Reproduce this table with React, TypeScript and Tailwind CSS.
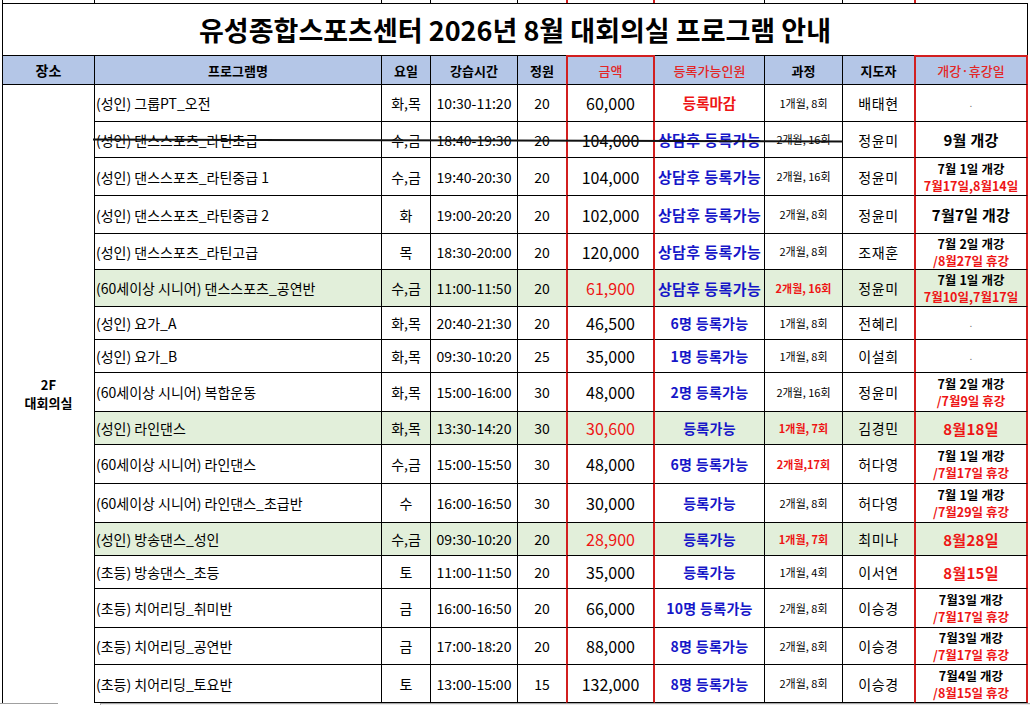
import React from "react";

const RED_TXT = "text-[#ee1515]";

type Note =
  | { t: "dot" }
  | { t: "big"; text: string; red?: boolean }
  | { t: "two"; a: string; b: string };

type Avail = { text: string; kind: "closed" | "consult" | "blue" };

type Row = {
  name: string;
  day: string;
  time: string;
  cap: string;
  price: string;
  priceRed?: boolean;
  avail: Avail;
  course: string;
  courseRed?: boolean;
  teacher: string;
  note: Note;
  h: number;
  green?: boolean;
  strike?: boolean;
};

const H: Record<number, string> = {
  33: "h-[33px]",
  36: "h-[36px]",
  37: "h-[37px]",
  38: "h-[38px]",
  39: "h-[39px]",
};

const consult: Avail = { text: "상담후 등록가능", kind: "consult" };
const able: Avail = { text: "등록가능", kind: "blue" };

const rows: Row[] = [
  { name: "(성인) 그룹PT_오전", day: "화,목", time: "10:30-11:20", cap: "20", price: "60,000", avail: { text: "등록마감", kind: "closed" }, course: "1개월, 8회", teacher: "배태현", note: { t: "dot" }, h: 37 },
  { name: "(성인) 댄스스포츠_라틴초급", day: "수,금", time: "18:40-19:30", cap: "20", price: "104,000", avail: consult, course: "2개월, 16회", teacher: "정윤미", note: { t: "big", text: "9월 개강" }, h: 36, strike: true },
  { name: "(성인) 댄스스포츠_라틴중급 1", day: "수,금", time: "19:40-20:30", cap: "20", price: "104,000", avail: consult, course: "2개월, 16회", teacher: "정윤미", note: { t: "two", a: "7월 1일 개강", b: "7월17일,8월14일" }, h: 38 },
  { name: "(성인) 댄스스포츠_라틴중급 2", day: "화", time: "19:00-20:20", cap: "20", price: "102,000", avail: consult, course: "2개월, 8회", teacher: "정윤미", note: { t: "big", text: "7월7일 개강" }, h: 38 },
  { name: "(성인) 댄스스포츠_라틴고급", day: "목", time: "18:30-20:00", cap: "20", price: "120,000", avail: consult, course: "2개월, 8회", teacher: "조재훈", note: { t: "two", a: "7월 2일 개강", b: "/8월27일 휴강" }, h: 36 },
  { name: "(60세이상 시니어) 댄스스포츠_공연반", day: "수,금", time: "11:00-11:50", cap: "20", price: "61,900", priceRed: true, avail: consult, course: "2개월, 16회", courseRed: true, teacher: "정윤미", note: { t: "two", a: "7월 1일 개강", b: "7월10일,7월17일" }, h: 37, green: true },
  { name: "(성인) 요가_A", day: "화,목", time: "20:40-21:30", cap: "20", price: "46,500", avail: { text: "6명 등록가능", kind: "blue" }, course: "1개월, 8회", teacher: "전혜리", note: { t: "dot" }, h: 33 },
  { name: "(성인) 요가_B", day: "화,목", time: "09:30-10:20", cap: "25", price: "35,000", avail: { text: "1명 등록가능", kind: "blue" }, course: "1개월, 8회", teacher: "이설희", note: { t: "dot" }, h: 33 },
  { name: "(60세이상 시니어) 복합운동", day: "화,목", time: "15:00-16:00", cap: "30", price: "48,000", avail: { text: "2명 등록가능", kind: "blue" }, course: "2개월, 16회", teacher: "정윤미", note: { t: "two", a: "7월 2일 개강", b: "/7월9일 휴강" }, h: 39 },
  { name: "(성인) 라인댄스", day: "화,목", time: "13:30-14:20", cap: "30", price: "30,600", priceRed: true, avail: able, course: "1개월, 7회", courseRed: true, teacher: "김경민", note: { t: "big", text: "8월18일", red: true }, h: 33, green: true },
  { name: "(60세이상 시니어) 라인댄스", day: "수,금", time: "15:00-15:50", cap: "30", price: "48,000", avail: { text: "6명 등록가능", kind: "blue" }, course: "2개월,17회", courseRed: true, teacher: "허다영", note: { t: "two", a: "7월 1일 개강", b: "/7월17일 휴강" }, h: 39 },
  { name: "(60세이상 시니어) 라인댄스_초급반", day: "수", time: "16:00-16:50", cap: "30", price: "30,000", avail: able, course: "2개월, 8회", teacher: "허다영", note: { t: "two", a: "7월 1일 개강", b: "/7월29일 휴강" }, h: 39 },
  { name: "(성인) 방송댄스_성인", day: "수,금", time: "09:30-10:20", cap: "20", price: "28,900", priceRed: true, avail: able, course: "1개월, 7회", courseRed: true, teacher: "최미나", note: { t: "big", text: "8월28일", red: true }, h: 33, green: true },
  { name: "(초등) 방송댄스_초등", day: "토", time: "11:00-11:50", cap: "20", price: "35,000", avail: able, course: "1개월, 4회", teacher: "이서연", note: { t: "big", text: "8월15일", red: true }, h: 33 },
  { name: "(초등) 치어리딩_취미반", day: "금", time: "16:00-16:50", cap: "20", price: "66,000", avail: { text: "10명 등록가능", kind: "blue" }, course: "2개월, 8회", teacher: "이승경", note: { t: "two", a: "7월3일 개강", b: "/7월17일 휴강" }, h: 39 },
  { name: "(초등) 치어리딩_공연반", day: "금", time: "17:00-18:20", cap: "20", price: "88,000", avail: { text: "8명 등록가능", kind: "blue" }, course: "2개월, 8회", teacher: "이승경", note: { t: "two", a: "7월3일 개강", b: "/7월17일 휴강" }, h: 37 },
  { name: "(초등) 치어리딩_토요반", day: "토", time: "13:00-15:00", cap: "15", price: "132,000", avail: { text: "8명 등록가능", kind: "blue" }, course: "2개월, 8회", teacher: "이승경", note: { t: "two", a: "7월4일 개강", b: "/8월15일 휴강" }, h: 38 },
];

// column width + side-border classes
const C = {
  place: "w-[92px] border-r border-r-black",
  name: "w-[287px] border-r border-r-black",
  day: "w-[49px] border-r border-r-black",
  time: "w-[87px] border-r border-r-black",
  cap: "w-[48px]",
  price: "w-[89px] border-x-2 border-x-[#d21f1f]",
  avail: "w-[110px] border-r border-r-black",
  course: "w-[78px] border-r border-r-black",
  teacher: "w-[71px]",
  note: "w-[114px] border-x-2 border-x-[#d21f1f]",
};

function Cell({ col, className = "", children }: { col: string; className?: string; children?: React.ReactNode }) {
  return (
    <div className={`${col} shrink-0 border-b border-b-black flex items-center ${className}`}>{children}</div>
  );
}

function AvailText({ a }: { a: Avail }) {
  if (a.kind === "closed")
    return <span className={`${RED_TXT} font-bold text-[14.5px]`}>{a.text}</span>;
  if (a.kind === "consult")
    return <span className="text-[#1616c8] font-bold text-[15px] tracking-[0.4px]">{a.text}</span>;
  return <span className="text-[#1616c8] font-bold text-[14px] tracking-[0.3px]">{a.text}</span>;
}

function NoteView({ n }: { n: Note }) {
  if (n.t === "dot") return <span className="text-[#777] text-[10px] leading-none">.</span>;
  if (n.t === "big")
    return (
      <span className={`font-bold text-[15px] tracking-[0.3px] ${n.red ? RED_TXT : "text-black"}`}>{n.text}</span>
    );
  return (
    <div className="flex flex-col items-center leading-[17px]">
      <span className="font-bold text-[12.5px] text-black tracking-[0.1px]">{n.a}</span>
      <span className={`font-bold text-[12.5px] ${RED_TXT}`}>{n.b}</span>
    </div>
  );
}

export default function App() {
  return (
    <div className="w-[1030px] h-[705px] overflow-hidden bg-white font-['Noto_Sans_CJK_KR','Noto_Sans',sans-serif] text-black">
      <div className="ml-[2px] w-[1026px]">
        {/* top partial strip */}
        <div className="flex h-[3px] border-l border-l-black">
          <div className="w-[92px] shrink-0 border-r border-r-black" />
          <div className="w-[287px] shrink-0 border-r border-r-black" />
          <div className="w-[49px] shrink-0 border-r border-r-black" />
          <div className="w-[87px] shrink-0 border-r border-r-black" />
          <div className="w-[48px] shrink-0" />
          <div className="w-[89px] shrink-0 border-x-2 border-x-[#d21f1f]" />
          <div className="w-[110px] shrink-0 border-r border-r-black" />
          <div className="w-[78px] shrink-0 border-r border-r-black" />
          <div className="w-[71px] shrink-0" />
          <div className="w-[114px] shrink-0 border-l-2 border-l-[#d21f1f]" />
        </div>

        {/* title */}
        <div className="h-[52px] border-t border-x border-black flex items-center justify-center">
          <h1 className="text-[27px] font-bold leading-none">
            유성종합스포츠센터 2026년 8월 대회의실 프로그램 안내
          </h1>
        </div>

        {/* header */}
        <div className="flex h-[30px] border-l border-l-black bg-[#b4c6e7] text-[13px] font-bold leading-none">
          <div className={`${C.place} shrink-0 border-y border-y-black flex items-center justify-center text-[14px]`}>장소</div>
          <div className={`${C.name} shrink-0 border-y border-y-black flex items-center justify-center`}>프로그램명</div>
          <div className={`${C.day} shrink-0 border-y border-y-black flex items-center justify-center`}>요일</div>
          <div className={`${C.time} shrink-0 border-y border-y-black flex items-center justify-center`}>강습시간</div>
          <div className={`${C.cap} shrink-0 border-y border-y-black flex items-center justify-center`}>정원</div>
          <div className={`${C.price} shrink-0 border-t-2 border-t-[#d21f1f] border-b border-b-black flex items-center justify-center text-[#e32626] font-medium`}>금액</div>
          <div className={`${C.avail} shrink-0 border-y border-y-black flex items-center justify-center text-[#e32626] font-medium`}>등록가능인원</div>
          <div className={`${C.course} shrink-0 border-y border-y-black flex items-center justify-center`}>과정</div>
          <div className={`${C.teacher} shrink-0 border-y border-y-black flex items-center justify-center`}>지도자</div>
          <div className={`${C.note} shrink-0 border-t-2 border-t-[#d21f1f] border-b border-b-black flex items-center justify-center text-[#e32626] font-medium`}>개강·휴강일</div>
        </div>

        {/* body */}
        <div className="flex border-l border-l-black">
          <div className={`${C.place} shrink-0 flex flex-col items-center justify-center font-bold text-[13px]`}>
            <div className="leading-[18px]">2F</div>
            <div className="leading-[18px]">대회의실</div>
          </div>
          <div className="flex flex-col">
            {rows.map((r, i) => (
              <div key={i} className={`relative flex ${H[r.h]} ${r.green ? "bg-[#e2efda]" : "bg-white"}`}>
                <Cell col={C.name} className="pl-px text-[14px] leading-none whitespace-nowrap">{r.name}</Cell>
                <Cell col={C.day} className="justify-center text-[14px] leading-none">{r.day}</Cell>
                <Cell col={C.time} className="justify-center text-[14px] leading-none">{r.time}</Cell>
                <Cell col={C.cap} className="justify-center text-[14px] leading-none">{r.cap}</Cell>
                <Cell col={C.price} className={`justify-center text-[16px] leading-none ${r.priceRed ? RED_TXT : "text-black"}`}>{r.price}</Cell>
                <Cell col={C.avail} className="justify-center leading-none whitespace-nowrap"><AvailText a={r.avail} /></Cell>
                <Cell col={C.course} className={`justify-center text-[11px] leading-none whitespace-nowrap ${r.courseRed ? `${RED_TXT} font-bold` : "text-black"}`}>{r.course}</Cell>
                <Cell col={C.teacher} className="justify-center text-[14px] leading-none tracking-[0.6px]">{r.teacher}</Cell>
                <Cell col={C.note} className="justify-center leading-none whitespace-nowrap"><NoteView n={r.note} /></Cell>
                {r.strike && (
                  <svg className="absolute left-[-2px] top-[16px] pointer-events-none" width="750" height="5" viewBox="0 0 750 5">
                    <line x1="0" y1="1.5" x2="750" y2="3.5" stroke="#111" strokeWidth="2" />
                  </svg>
                )}
              </div>
            ))}
          </div>
        </div>
      </div>
      {/* bottom strip */}
      <div className="flex h-[3px]">
        <div className="w-[58px] border-t border-t-[#a0a0a0]" />
        <div className="w-[42px]" />
        <div className="flex-1 bg-[#ececec] border-t border-l border-[#a8a8a8]" />
      </div>
    </div>
  );
}
